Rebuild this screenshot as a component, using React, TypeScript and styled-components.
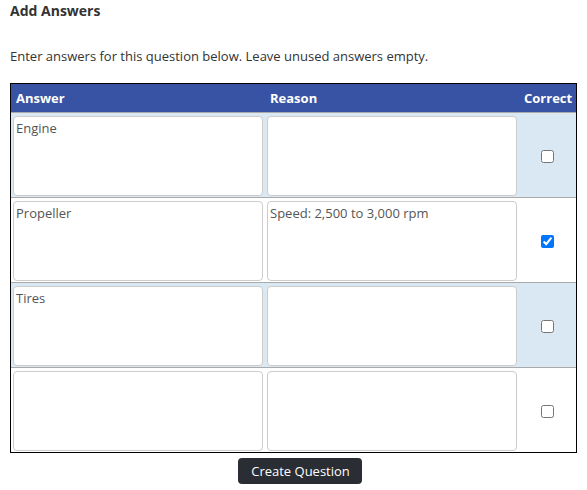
import React, { useState } from "react";
import styled, { createGlobalStyle } from "styled-components";

const Global = createGlobalStyle`
  html, body { margin: 0; padding: 0; background: #fff; }
  body { font-family: "Open Sans", "Noto Sans", sans-serif; color: #333; font-size: 13px; }
`;

const Page = styled.div`
  padding: 1px 10px 0 10px;
  width: 567px;
`;

const Title = styled.h3`
  margin: 0;
  font-size: 14px;
  font-weight: 700;
  line-height: 19px;
  color: #333;
`;

const Intro = styled.p`
  margin: 27px 0 0 0;
  font-size: 13px;
  line-height: 18px;
  color: #333;
`;

const Table = styled.div`
  margin-top: 18px;
  border: 1px solid #000;
  display: grid;
  grid-template-columns: 254px 254px 1fr;
`;

const HeadCell = styled.div<{ $right?: boolean }>`
  background: #3953a4;
  color: #fff;
  font-weight: 700;
  font-size: 13px;
  height: 28px;
  line-height: 28px;
  padding: 0 4px 0 5px;
  text-align: ${(p) => (p.$right ? "right" : "left")};
`;

const Cell = styled.div<{ $alt: boolean }>`
  background: ${(p) => (p.$alt ? "#d9e8f2" : "#fff")};
  border-top: 1px solid #aaa;
  padding: 3px 2px 1px 2px;
  display: flex;
  align-items: center;
  justify-content: center;
`;

const Area = styled.textarea`
  display: block;
  box-sizing: border-box;
  width: 250px;
  height: 80px;
  margin: 0;
  resize: none;
  border: 1px solid #ccc;
  border-radius: 4px;
  background: #fff;
  font-family: "Open Sans", "Noto Sans", sans-serif;
  font-size: 13px;
  line-height: 18px;
  color: #555;
  padding: 2px 2px 1px 2px;
  outline: none;
`;

const Check = styled.input`
  width: 13px;
  height: 13px;
  margin: 0;
`;

const Footer = styled.div`
  display: flex;
  justify-content: center;
  padding: 5px 0 0 13px;
`;

const Button = styled.button`
  background: #2a2d34;
  color: #fff;
  border: none;
  border-radius: 4px;
  font-family: "Open Sans", "Noto Sans", sans-serif;
  font-size: 13px;
  height: 26px;
  padding: 0 12px 0 13px;
  cursor: pointer;
`;

const initial = [
  { answer: "Engine", reason: "", correct: false },
  { answer: "Propeller", reason: "Speed: 2,500 to 3,000 rpm", correct: true },
  { answer: "Tires", reason: "", correct: false },
  { answer: "", reason: "", correct: false },
];

export default function App() {
  const [rows, setRows] = useState(initial);
  const update = (i: number, patch: Partial<(typeof initial)[number]>) =>
    setRows((r) => r.map((row, j) => (j === i ? { ...row, ...patch } : row)));
  return (
    <Page>
      <Global />
      <Title>Add Answers</Title>
      <Intro>Enter answers for this question below. Leave unused answers empty.</Intro>
      <Table>
        <HeadCell>Answer</HeadCell>
        <HeadCell>Reason</HeadCell>
        <HeadCell $right>Correct</HeadCell>
        {rows.map((row, i) => (
          <React.Fragment key={i}>
            <Cell $alt={i % 2 === 0}>
              <Area value={row.answer} onChange={(e) => update(i, { answer: e.target.value })} />
            </Cell>
            <Cell $alt={i % 2 === 0}>
              <Area value={row.reason} onChange={(e) => update(i, { reason: e.target.value })} />
            </Cell>
            <Cell $alt={i % 2 === 0}>
              <Check type="checkbox" checked={row.correct} onChange={(e) => update(i, { correct: e.target.checked })} />
            </Cell>
          </React.Fragment>
        ))}
      </Table>
      <Footer>
        <Button>Create Question</Button>
      </Footer>
    </Page>
  );
}
